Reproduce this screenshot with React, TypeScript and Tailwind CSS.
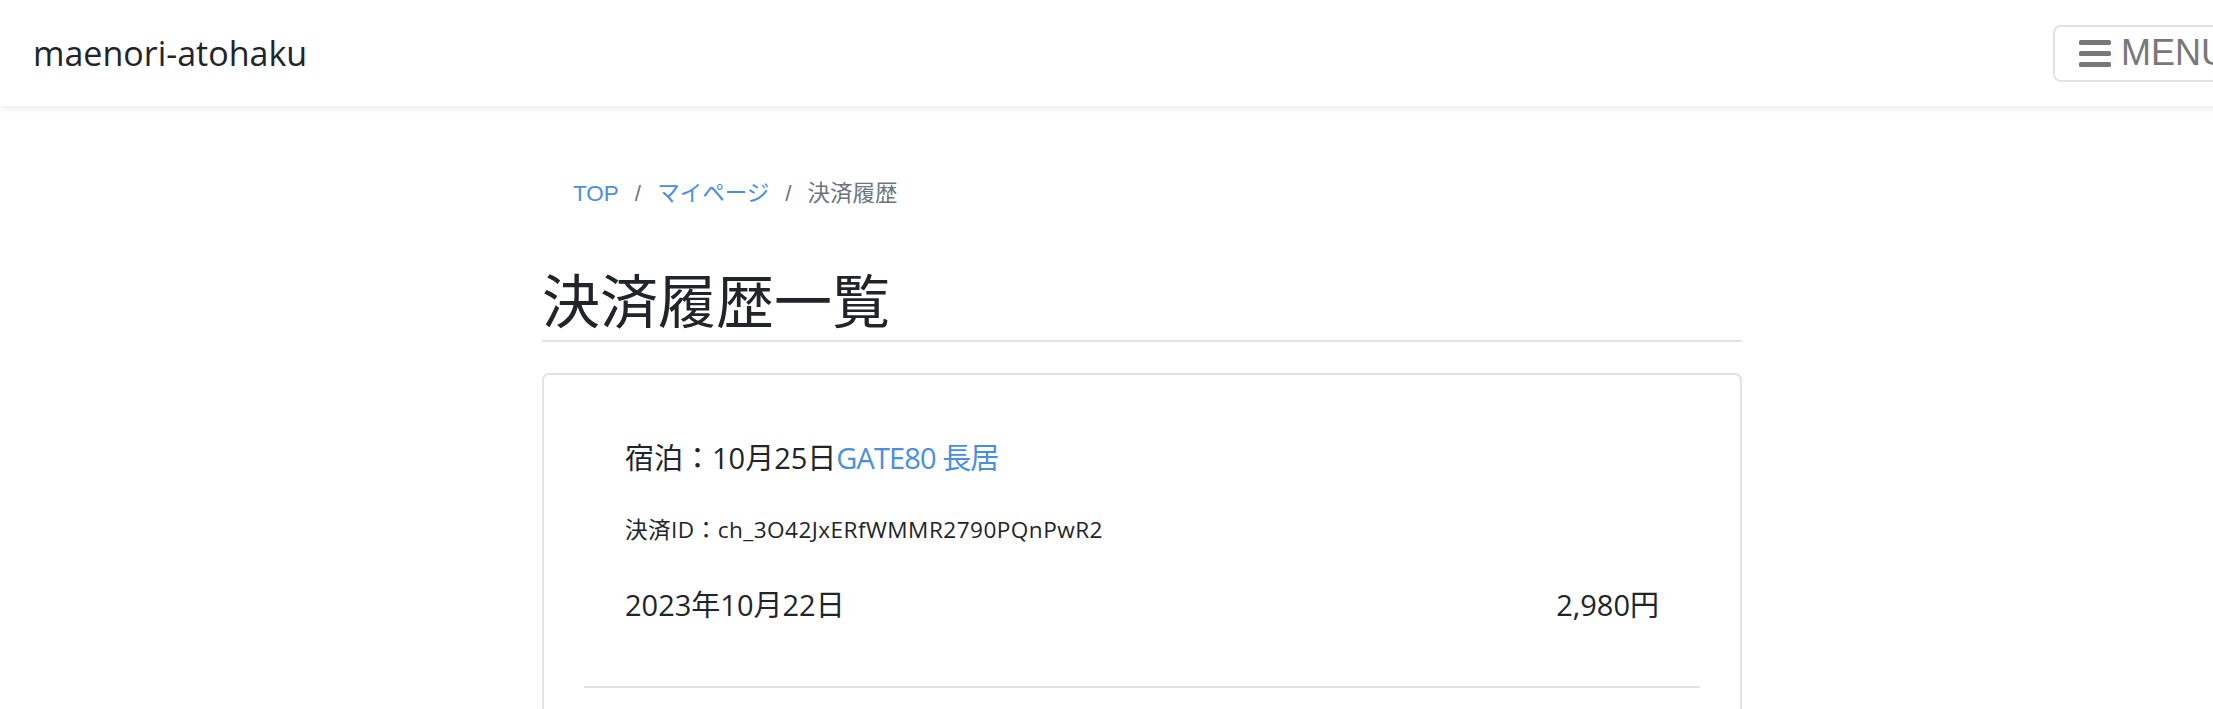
import React from "react";

const latin = "font-['Open_Sans','Noto_Sans_CJK_JP',sans-serif]";

function MenuButton() {
  return (
    <button className="flex items-center h-[57px] pl-[24px] pr-[22px] border-2 border-[#e3e3e3] rounded-[8px] bg-white text-[#787878]">
      <svg width="32" height="27" viewBox="0 0 32 27" className="mr-[10px]">
        <rect x="0" y="0" width="32" height="5" rx="1.5" fill="#787878" />
        <rect x="0" y="11" width="32" height="5" rx="1.5" fill="#787878" />
        <rect x="0" y="22" width="32" height="5" rx="1.5" fill="#787878" />
      </svg>
      <span className="font-['Liberation_Sans',sans-serif] text-[36px] leading-none">MENU</span>
    </button>
  );
}

export default function App() {
  return (
    <div className="w-full min-h-screen overflow-hidden bg-white text-[#212529]">
      <div className="w-[2284px]">
        <header className="h-[106px] bg-white shadow-[0_3px_6px_rgba(0,0,0,0.07)] flex items-center justify-between px-[33px]">
          <a className={`${latin} text-[34px] text-[#212529]`}>maenori-atohaku</a>
          <MenuButton />
        </header>

        <main className="w-[1200px] mx-auto">
          <nav className="mt-[72px] pl-[31px] flex items-center h-[32px] text-[22.5px] font-['Liberation_Sans','Noto_Sans_CJK_JP',sans-serif]">
            <a className="text-[#4a90d9]">TOP</a>
            <span className="mx-[16px] text-[#6c757d]">/</span>
            <a className="text-[#4a90d9]">マイページ</a>
            <span className="mx-[16px] text-[#6c757d]">/</span>
            <span className="text-[#6c757d]">決済履歴</span>
          </nav>

          <h1 className="mt-[54px] pb-[8px] border-b-2 border-[#dee2e6] text-[58px] leading-[68px] font-normal font-['Noto_Sans_CJK_JP',sans-serif]">
            決済履歴一覧
          </h1>

          <div className="mt-[31px] border-2 border-[#e2e2e2] rounded-[7px] p-[40px]">
            <div className={`${latin} px-[41px] pt-[23px] pb-[61px] border-b-2 border-[#e2e2e2]`}>
              <p className="text-[29px] leading-[40px]">
                宿泊：10月25日<a className="text-[#4a90d9] tracking-[-0.9px]">GATE80 長居</a>
              </p>
              <p className="mt-[37px] text-[22.6px] leading-[30px] tracking-[0.45px]">決済ID：ch_3O42JxERfWMMR2790PQnPwR2</p>
              <div className="mt-[40px] flex justify-between text-[29px] leading-[40px]">
                <span>2023年10月22日</span>
                <span>2,980円</span>
              </div>
            </div>
          </div>
        </main>
      </div>
    </div>
  );
}
